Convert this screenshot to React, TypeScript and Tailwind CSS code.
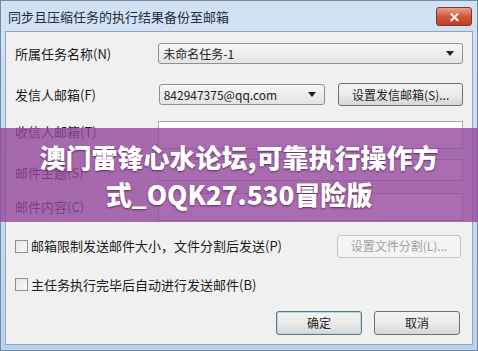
import { ReactNode } from "react";

const font = "font-['Microsoft_YaHei','Noto_Sans_CJK_SC',sans-serif]";

function Combo({ text, className }: { text: string; className: string }) {
  return (
    <div
      className={`flex h-[21px] items-center justify-between rounded-[3px] border border-[#8e8f8f] bg-gradient-to-b from-[#f7f7f7] to-[#e3e3e3] pl-1 pr-2 ${className}`}
    >
      <span className="text-[12px] text-[#222]">{text}</span>
      <span className="h-0 w-0 border-x-[4px] border-t-[5px] border-x-transparent border-t-[#222]" />
    </div>
  );
}

function Btn({
  children,
  className,
  disabled = false,
}: {
  children: ReactNode;
  className: string;
  disabled?: boolean;
}) {
  return (
    <div
      className={`flex items-center justify-center rounded-[3px] border text-[12px] ${
        disabled
          ? "border-[#c4c4c4] bg-[#f4f4f4] text-[#a0a0a0]"
          : "border-[#707070] bg-gradient-to-b from-[#f3f3f3] via-[#ebebeb] to-[#d6d6d6] text-[#222]"
      } ${className}`}
    >
      {children}
    </div>
  );
}

function Field({ className }: { className: string }) {
  return <div className={`border border-[#abadb3] bg-white ${className}`} />;
}

function Check({ label }: { label: string }) {
  return (
    <div className="flex items-center gap-[3px]">
      <span className="h-[13px] w-[13px] border border-[#8f8f8f] bg-gradient-to-br from-[#e4e4e4] to-[#fbfbfb]" />
      <span className="text-[13px] text-[#1a1a1a]">{label}</span>
    </div>
  );
}

export default function App() {
  return (
    <div className={`relative h-[351px] w-[478px] overflow-hidden bg-[#c6d9ee] ${font}`}>
      <div className="flex h-full flex-col border border-[#6e8bad] bg-gradient-to-b from-[#d3e2f3] to-[#bcd2ea]">
        {/* title bar */}
        <div className="flex h-[30px] shrink-0 items-start justify-between pl-[7px] pr-[5px] pt-[6px]">
          <span className="text-[13px] text-[#1e2d40]">同步且压缩任务的执行结果备份至邮箱</span>
          <div className="flex h-[19px] w-[36px] items-center justify-center rounded-[3px] border border-[#7a3a30] bg-gradient-to-b from-[#e9a08d] via-[#d1573c] to-[#c13f26] text-[13px] font-bold leading-none text-white">
            ✕
          </div>
        </div>

        {/* client area */}
        <div className="mx-[4px] mb-[5px] flex flex-1 flex-col border border-[#8fa7c3] bg-[#f0f0f0] px-[9px] text-[#1a1a1a]">
          <div className="mt-[11px] flex items-center">
            <span className="w-[144px] text-[13px]">所属任务名称(N)</span>
            <Combo text="未命名任务-1" className="w-[306px]" />
          </div>

          <div className="mt-[19px] flex items-center">
            <span className="w-[144px] text-[13px]">发信人邮箱(F)</span>
            <Combo text="842947375@qq.com" className="w-[167px]" />
            <Btn className="ml-[13px] h-[23px] w-[125px]">设置发信邮箱(S)...</Btn>
          </div>

          <div className="mt-[15px] flex items-start">
            <span className="w-[144px] pt-[1px] text-[13px]">收信人邮箱(T)</span>
            <Field className="h-[28px] w-[306px]" />
          </div>

          <div className="mt-[10px] flex items-start">
            <span className="w-[144px] pt-[4px] text-[13px]">邮件主题(S)</span>
            <Field className="h-[22px] w-[306px]" />
          </div>

          <div className="mt-[10px] flex items-start">
            <span className="w-[144px] pt-[4px] text-[13px]">邮件内容(C)</span>
            <Field className="h-[28px] w-[306px]" />
          </div>

          <div className="mt-[14px] flex items-center justify-between pr-[2px]">
            <Check label="邮箱限制发送邮件大小，文件分割后发送(P)" />
            <Btn disabled className="h-[23px] w-[124px]">设置文件分割(L)...</Btn>
          </div>

          <div className="mt-[17px]">
            <Check label="主任务执行完毕后自动进行发送邮件(B)" />
          </div>

          <div className="mt-[17px] flex justify-end gap-[12px] pr-[3px]">
            <Btn className="h-[24px] w-[86px] border-[#3c7fb1] shadow-[inset_0_0_0_1px_#a8dcf2]">确定</Btn>
            <Btn className="h-[24px] w-[86px]">取消</Btn>
          </div>
        </div>
      </div>

      {/* overlay banner */}
      <div className="absolute left-0 top-[128px] flex h-[94px] w-full flex-col items-center justify-center bg-[#94479c]/80 font-['Noto_Sans_CJK_SC',sans-serif] text-[26px] font-black leading-[37px] text-white [text-shadow:0_1px_2px_rgba(60,20,60,0.7)]">
        <span>澳门雷锋心水论坛,可靠执行操作方</span>
        <span>式_OQK27.530冒险版</span>
      </div>
    </div>
  );
}
